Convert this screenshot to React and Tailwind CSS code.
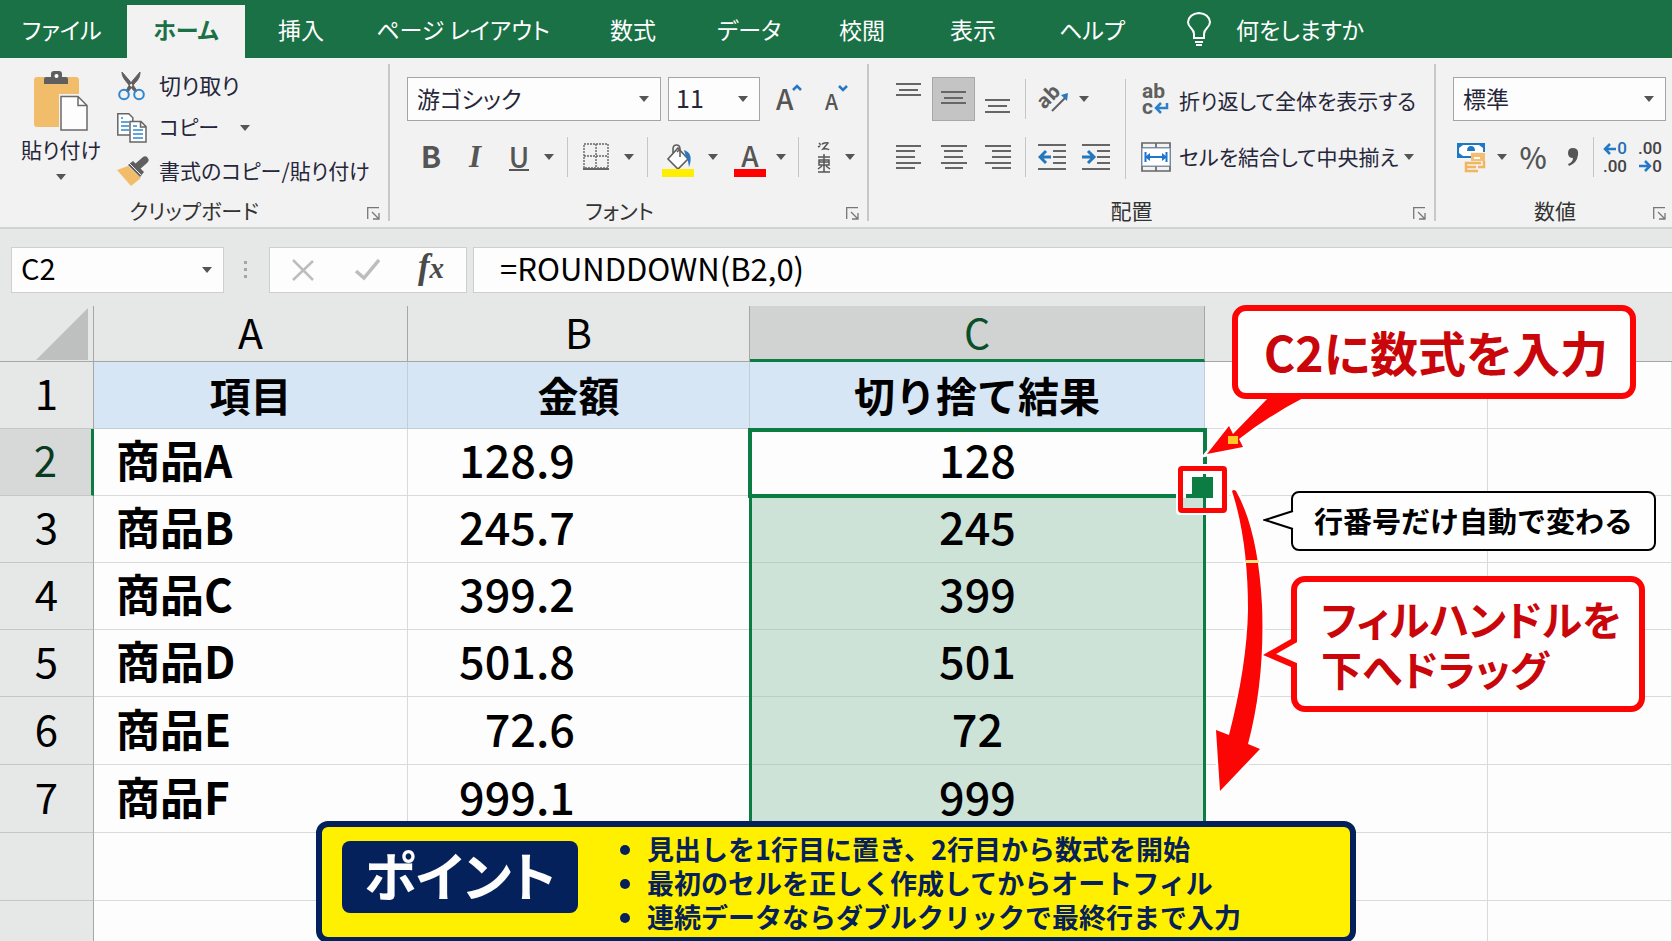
import { useState } from 'react';

const tabs = [
  { name: 'ファイル', cls: 'w-[127px] pl-[22px] text-left' },
  { name: 'ホーム', cls: 'w-[118px] text-center', active: true },
  { name: '挿入', cls: 'w-[112px] text-center' },
  { name: 'ページ レイアウト', cls: 'w-[212px] text-center' },
  { name: '数式', cls: 'w-[128px] text-center' },
  { name: 'データ', cls: 'w-[104px] text-center' },
  { name: '校閲', cls: 'w-[122px] text-center' },
  { name: '表示', cls: 'w-[100px] text-center' },
  { name: 'ヘルプ', cls: 'w-[138px] text-center' },
];

const items = [
  { name: '商品A', price: '128.9', result: '128' },
  { name: '商品B', price: '245.7', result: '245' },
  { name: '商品C', price: '399.2', result: '399' },
  { name: '商品D', price: '501.8', result: '501' },
  { name: '商品E', price: '72.6', result: '72' },
  { name: '商品F', price: '999.1', result: '999' },
];

const points = [
  '見出しを1行目に置き、2行目から数式を開始',
  '最初のセルを正しく作成してからオートフィル',
  '連続データならダブルクリックで最終行まで入力',
];

const Caret = ({ className = '' }) => (
  <svg viewBox="0 0 12 7" className={`w-[10px] h-[6px] shrink-0 ${className}`}>
    <path d="M0 0h12L6 7z" fill="#555" />
  </svg>
);

const CaretButton = ({ label, className = '' }) => (
  <button aria-label={label} className={`w-4 h-11 flex items-center justify-center ${className}`}>
    <Caret />
  </button>
);

const Sep = ({ className = '' }) => <span className={`w-px h-10 bg-[#c6c6c6] shrink-0 ${className}`} />;

const IconButton = ({ label, className = 'w-8', children }) => (
  <button aria-label={label} className={`h-11 flex items-center justify-center shrink-0 ${className}`}>
    {children}
  </button>
);

const SelectBox = ({ label, options, className, textClass = 'pl-[9px] pb-[2px] text-[23px]' }) => (
  <div className={`relative bg-[#fdfdfd] border shrink-0 ${className}`}>
    <select aria-label={label} className={`appearance-none w-full h-full bg-transparent outline-none ${textClass}`}>
      {options.map((o) => <option key={o}>{o}</option>)}
    </select>
    <Caret className="absolute right-[11px] top-1/2 -translate-y-1/2 pointer-events-none" />
  </div>
);

const Group = ({ name, className, labelClass = '', children }) => (
  <section className={`relative h-[157px] border-r-2 border-[#c8c8c8] shrink-0 ${className}`}>
    {children}
    <h2 className={`absolute inset-x-0 bottom-0 h-[21px] leading-[21px] text-[21px] text-center text-[#333] ${labelClass}`}>{name}</h2>
    <button aria-label={`${name}の詳細`} className="absolute right-2 bottom-px">
      <svg viewBox="0 0 13 13" className="w-[13px] h-[13px]" fill="none" stroke="#777" strokeWidth="1.3">
        <path d="M.7 12V.7H12M5 5l6.5 6.5M12 6v6H6" />
      </svg>
    </button>
  </section>
);

// Text lines of the alignment icons, each as [x1, x2, y]
const Lines = ({ rows }) => (
  <svg viewBox="0 0 26 44" className="w-[26px] h-11" stroke="#666" strokeWidth="2">
    {rows.map(([a, b, y]) => <path key={y} d={`M${a} ${y}H${b}`} />)}
  </svg>
);

const PasteIcon = () => (
  <svg viewBox="0 0 56 62" className="w-14 h-[62px]">
    <rect x="1" y="6" width="45" height="50" rx="3" fill="#f2bd6b" />
    <path d="M11 13V8q0-2 2-2h5V3q0-3 3-3h5q3 0 3 3v3h4q2 0 2 2v5z" fill="#5f5f5f" />
    <circle cx="23.500" cy="5" r="2" fill="#fff" />
    <path d="M28 25h18l9 9v26H28z" fill="#fdfdfd" stroke="#f2f2f2" strokeWidth="4" />
    <path d="M28 25.500h17l9 9V59H28zM45 25.500v9h9" fill="#fdfdfd" stroke="#6a6a6a" strokeWidth="1.500" />
  </svg>
);

const CutIcon = () => (
  <svg viewBox="0 0 30 30" className="w-[30px] h-[30px]">
    <path d="M5 1c0 5 3 8 7 13l6 7 2-1C16 13 10 7 5 1zM23 1c0 5-2 8-6 12l-6 8-2-1C12 13 18 7 23 1z" fill="#5f5f5f" stroke="#5f5f5f" />
    <circle cx="7" cy="23.500" r="4.800" fill="none" stroke="#2f86d1" strokeWidth="2" />
    <circle cx="22" cy="23.500" r="4.800" fill="none" stroke="#2f86d1" strokeWidth="2" />
  </svg>
);

const CopyIcon = () => (
  <svg viewBox="0 0 30 30" className="w-[30px] h-[30px]" strokeWidth="1.500">
    <path d="M.8.800h11l4 4V22H.800z" fill="#fff" stroke="#666" />
    <path d="M4 5h2M4 9h8M4 13h8M4 17h8" stroke="#2f86d1" />
    <path d="M13 8.500h11l5 5V29H13zM23.500 8.500V14H29" fill="#fff" stroke="#666" />
    <path d="M16 13h4M16 17h10M16 21h10M16 25h10" stroke="#2f86d1" />
  </svg>
);

const BrushIcon = () => (
  <svg viewBox="0 0 32 30" className="w-8 h-[30px]">
    <path d="M0 14l11-4 13 12-10 8z" fill="#f2bd6b" />
    <path d="M11 9l5-4 11 11-4 5z" fill="#5f5f5f" />
    <path d="M20 11l8-7" stroke="#5f5f5f" strokeWidth="7" strokeLinecap="round" />
    <path d="M12 7l12 12" stroke="#f2f2f2" strokeWidth="1" />
  </svg>
);

const BorderIcon = () => (
  <svg viewBox="0 0 26 28" className="w-[26px] h-7" fill="none" stroke="#666">
    <path d="M1 1h24v24H1zM13 1v24M1 13h24" strokeWidth="1.400" strokeDasharray="2 1" />
    <path d="M0 26h26" strokeWidth="2" />
  </svg>
);

const FillIcon = () => (
  <svg viewBox="0 0 32 34" className="w-8 h-[34px]">
    <path d="M16 4l10 11-10 10L6 15z" fill="#fff" stroke="#5f5f5f" strokeWidth="1.600" />
    <path d="M11 9V5q0-4 3.500-4T18 5v8M15 8l3-3" fill="none" stroke="#5f5f5f" strokeWidth="1.600" />
    <path d="M22 6q10 3 5 17-1-8-3-10z" fill="#2b77bd" />
    <path d="M0 25h32v8H0z" fill="#ffee00" />
  </svg>
);

const OrientationIcon = () => (
  <svg viewBox="0 0 30 30" className="w-[30px] h-[30px] overflow-visible">
    <text x="1" y="22" transform="rotate(-45 8 19)" fontSize="20" fontWeight="700" fill="#5f5f5f" className="font-['Noto_Sans']">ab</text>
    <path d="M13 27l14-14" stroke="#5f5f5f" strokeWidth="2" />
    <path d="M22 11l7-2-1 8z" fill="#2b77bd" />
  </svg>
);

const WrapIcon = () => (
  <svg viewBox="0 0 28 32" className="w-7 h-8 overflow-visible" fontSize="21" fontWeight="700" fill="#5f5f5f">
    <text x="1" y="15" className="font-['Roboto']">ab</text>
    <text x="1" y="31" className="font-['Roboto']">c</text>
    <path d="M26 20v5H16M20 20l-5 5 5 5" fill="none" stroke="#2b7fcb" strokeWidth="2.500" />
  </svg>
);

const MergeIcon = () => (
  <svg viewBox="0 0 30 30" className="w-[30px] h-[30px]" fill="none">
    <path d="M1 1h28v28H1zM15 1v5M15 24v5M1 6h28M1 24h28" stroke="#666" strokeWidth="1.700" />
    <path d="M1 6h28v18H1z" fill="#fff" stroke="#7d99b5" />
    <path d="M4 15h22M4.500 10v10M25.500 10v10" stroke="#1c75cf" strokeWidth="2" />
    <path d="M4 15l5-4v8zM26 15l-5-4v8z" fill="#1c75cf" />
  </svg>
);

const IndentIcon = ({ right }) => (
  <svg viewBox="0 0 28 28" className="w-7 h-7" fill="none">
    <path d="M0 2h28M15 8h13M15 14h13M15 20h13M0 26h28" stroke="#666" strokeWidth="2" />
    <path d={right ? 'M0 14h11M6 8l6 6-6 6' : 'M13 14H2M8 8l-6 6 6 6'} stroke="#2476bd" strokeWidth="3" />
  </svg>
);

const CurrencyIcon = () => (
  <svg viewBox="0 0 30 32" className="w-[30px] h-8" fill="none">
    <path d="M1 2h28v15H1z" fill="#1f78c4" />
    <path d="M7 4h16l4 3v5l-4 3H7l-4-3V7z" fill="#fff" />
    <path d="M15 5q4 0 4 5h-8q0-5 4-5z" fill="#1f78c4" />
    <path d="M15 11h14v12H15z" fill="#f2f2f2" />
    <path d="M15 12h14v8H15z" fill="#f4bd70" />
    <path d="M18 17h6" stroke="#fff" strokeWidth="2" />
    <path d="M28 20v6h-6M25 22H10v4h10M10 26v4h12" stroke="#f1b560" strokeWidth="2.500" />
  </svg>
);

const DecimalIcon = ({ more }) => (
  <svg viewBox="0 0 26 32" className="w-[26px] h-8 overflow-visible" fontSize="17" fontWeight="500">
    <text x="25" y="13" textAnchor="end" fill={more ? '#1f6fb8' : '#444'} className="font-['Roboto']">{more ? '0' : '.00'}</text>
    <text x="25" y="31" textAnchor="end" fill="#444" className="font-['Roboto']">{more ? '.00' : '0'}</text>
    <path d={more ? 'M14 8H4M8 3L3 8l5 5' : 'M2 25h10M8 20l5 5-5 5'} fill="none" stroke="#2379c6" strokeWidth="2.500" />
  </svg>
);

const Ribbon = () => (
  <div className="flex pt-[6px] h-[171px] bg-[#f2f2f2] border-b-2 border-[#d2d3d3] text-[#26263a] overflow-hidden">
    <Group name="クリップボード" className="w-[390px]">
      <div className="flex">
        <button className="w-[114px] h-[122px] pt-[7px] pl-2 flex flex-col items-center text-[21px] leading-[26px]">
          <PasteIcon />
          <span className="pt-[3px]">貼り付け</span>
          <Caret className="mt-3" />
        </button>
        <div className="flex flex-col text-[21px]">
          <button className="h-[43px] flex items-center gap-[12px] pl-[3px]"><CutIcon /><span className="pb-[2px] text-[22px]">切り取り</span></button>
          <div className="h-[41px] flex items-center">
            <button className="flex items-center gap-[12px] pl-[3px]"><CopyIcon /><span className="pb-[2px]">コピー</span></button>
            <CaretButton label="コピーのオプション" className="ml-[18px]" />
          </div>
          <button className="h-[46px] flex items-center gap-[10px] pl-[3px]"><BrushIcon /><span>書式のコピー/貼り付け</span></button>
        </div>
      </div>
    </Group>

    <Group name="フォント" className="w-[479px]" labelClass="pr-[18px]">
      <div className="flex pt-[13px] pl-[17px]">
        <SelectBox label="フォント名" options={['游ゴシック']} className="w-[254px] h-11 border-[#a5a5a5]" />
        <SelectBox label="フォント サイズ" options={['11']} className="w-[92px] h-11 ml-[7px] border-[#a5a5a5]" textClass="pl-[7px] pb-[2px] text-[25px]" />
        <IconButton label="フォント サイズの拡大" className="w-12 ml-[5px]">
          <svg viewBox="0 0 26 30" className="w-[26px] h-[30px] overflow-visible">
            <text x="0" y="26" fontSize="28" fontWeight="500" fill="#555">A</text>
            <path d="M17 6l4-4 4 4" fill="none" stroke="#2379c6" strokeWidth="2.500" />
          </svg>
        </IconButton>
        <IconButton label="フォント サイズの縮小" className="w-12">
          <svg viewBox="0 0 26 30" className="w-[26px] h-[30px] overflow-visible">
            <text x="1" y="26" fontSize="21" fontWeight="500" fill="#555">A</text>
            <path d="M15 2l4 4 4-4" fill="none" stroke="#2379c6" strokeWidth="2.500" />
          </svg>
        </IconButton>
      </div>
      <div className="flex items-center pt-[14px] pl-[19px] text-[#555]">
        <IconButton label="太字" className="w-11 pb-[3px] text-[30px] font-bold">B</IconButton>
        <IconButton label="斜体" className="w-11 text-[31px] font-bold italic font-['Liberation_Serif']">I</IconButton>
        <IconButton label="下線" className="w-11"><span className="text-[28px] leading-[26px] font-medium border-b-2 border-[#555]">U</span></IconButton>
        <CaretButton label="下線のオプション" />
        <Sep className="ml-[10px]" />
        <IconButton label="罫線" className="w-8 ml-3"><BorderIcon /></IconButton>
        <CaretButton label="罫線のオプション" className="ml-[9px]" />
        <Sep className="ml-[10px]" />
        <IconButton label="塗りつぶしの色" className="w-8 ml-[14px] pt-[8px]"><FillIcon /></IconButton>
        <CaretButton label="塗りつぶしのオプション" className="ml-[11px]" />
        <IconButton label="フォントの色" className="w-8 ml-[13px] pt-[8px]">
          <svg viewBox="0 0 32 34" className="w-8 h-[34px] overflow-visible">
            <text x="16" y="23" textAnchor="middle" fontSize="28" fontWeight="500" fill="#555">A</text>
            <path d="M0 25h32v8H0z" fill="#f00" />
          </svg>
        </IconButton>
        <CaretButton label="フォントの色のオプション" className="ml-[7px]" />
        <Sep className="ml-[9px]" />
        <IconButton label="ふりがな" className="w-7 ml-[11px]">
          <svg viewBox="0 0 16 32" className="w-4 h-8" fill="none" stroke="#555" strokeWidth="1.500">
            <path d="M3 2l2 2M2 6l2-1M6 3q4-2 6-1L7 8q5-1 6 1M2 16h12M8 13v18M3 19h10v5H3zM3 21h10M2 28l4-3M14 28l-4-3M2 31h12" />
          </svg>
        </IconButton>
        <CaretButton label="ふりがなのオプション" className="ml-1" />
      </div>
    </Group>

    <Group name="配置" className="w-[567px]" labelClass="pr-[40px]">
      <div className="flex pt-[13px]">
        <div>
          <div className="flex items-center h-11 pl-[17px]">
            <IconButton label="上揃え" className="w-[46px]"><Lines rows={[[0, 25, 7], [3, 22, 13], [0, 25, 18]]} /></IconButton>
            <IconButton label="上下中央揃え" className="w-[43px] bg-[#c4c4c4] border border-[#a8a8a8]"><Lines rows={[[0, 25, 15], [3, 22, 21], [0, 25, 26]]} /></IconButton>
            <IconButton label="下揃え" className="w-[46px]"><Lines rows={[[0, 25, 23], [3, 22, 29], [0, 25, 35]]} /></IconButton>
            <Sep className="ml-1" />
            <IconButton label="方向" className="w-8 ml-3"><OrientationIcon /></IconButton>
            <CaretButton label="方向のオプション" className="ml-[6px]" />
          </div>
          <div className="flex items-center h-11 mt-[14px] pl-[17px]">
            <IconButton label="左揃え" className="w-[46px]"><Lines rows={[[0, 25, 11], [0, 19, 16], [0, 19, 22], [0, 25, 28], [0, 19, 33]]} /></IconButton>
            <IconButton label="中央揃え" className="w-[43px]"><Lines rows={[[0, 26, 11], [3, 22, 16], [3, 22, 22], [0, 26, 28], [4, 22, 33]]} /></IconButton>
            <IconButton label="右揃え" className="w-[46px]"><Lines rows={[[0, 26, 11], [7, 26, 16], [7, 26, 22], [0, 26, 28], [7, 26, 33]]} /></IconButton>
            <Sep className="ml-1" />
            <IconButton label="インデントを減らす" className="w-8 ml-[10px]"><IndentIcon /></IconButton>
            <IconButton label="インデントを増やす" className="w-8 ml-3"><IndentIcon right /></IconButton>
          </div>
        </div>
        <span className="w-px h-[100px] mt-[2px] ml-[13px] bg-[#c6c6c6]" />
        <div className="pl-[15px] text-[21px]">
          <button className="flex items-center h-11 gap-[10px]"><WrapIcon /><span className="pt-1">折り返して全体を表示する</span></button>
          <div className="flex items-center mt-[14px]">
            <button className="flex items-center h-11 gap-[8px]"><MergeIcon /><span>セルを結合して中央揃え</span></button>
            <CaretButton label="結合のオプション" className="ml-[3px]" />
          </div>
        </div>
      </div>
    </Group>

    <Group name="数値" className="w-[240px] border-r-0">
      <div className="pt-[13px] pl-[17px]">
        <SelectBox label="表示形式" options={['標準']} className="w-[213px] h-11 border-[#a5a5a5]" />
        <div className="flex items-center mt-[14px] text-[#555]">
          <IconButton label="通貨表示形式" className="w-9"><CurrencyIcon /></IconButton>
          <CaretButton label="通貨のオプション" className="ml-[5px]" />
          <IconButton label="パーセント スタイル" className="w-8 ml-[7px] text-[29px] font-medium">%</IconButton>
          <IconButton label="桁区切りスタイル" className="w-8 ml-2">
            <svg viewBox="0 0 12 20" className="w-3 h-5"><path d="M6 1q6 0 5 7-1 8-9 11l-1-2q5-2 5-6-5 0-5-5t5-5z" fill="#555" /></svg>
          </IconButton>
          <Sep className="ml-1" />
          <IconButton label="小数点以下の表示桁数を増やす" className="w-8 ml-[5px]"><DecimalIcon more /></IconButton>
          <IconButton label="小数点以下の表示桁数を減らす" className="w-8 ml-[3px]"><DecimalIcon /></IconButton>
        </div>
      </div>
    </Group>
  </div>
);

const FormulaBar = () => {
  const [formula, setFormula] = useState('=ROUNDDOWN(B2,0)');

  return (
    <div className="flex h-[77px] pt-[18px] pl-[11px] text-black">
      <SelectBox label="名前ボックス" options={['C2']} className="w-[213px] h-[46px] border-[#cfcfcf]" textClass="pl-[9px] pb-[6px] text-[29px] leading-[36px]" />
      <svg viewBox="0 0 4 20" className="w-1 h-5 mt-[13px] ml-5" fill="#a5a5a5">
        <path d="M0 1h3v3H0zM0 8h3v3H0zM0 15h3v3H0z" />
      </svg>
      <div className="flex w-[198px] h-[46px] ml-[21px] bg-[#fdfdfd] border border-[#cfcfcf]">
        <IconButton label="キャンセル" className="w-[66px]">
          <svg viewBox="0 0 22 22" className="w-[22px] h-[22px]" stroke="#bdbdbd" strokeWidth="2.500"><path d="M1 1l20 20M21 2L1 21" /></svg>
        </IconButton>
        <IconButton label="入力" className="w-[62px]">
          <svg viewBox="0 0 25 22" className="w-[25px] h-[22px]" fill="none" stroke="#bdbdbd" strokeWidth="3.500"><path d="M1 12l8 7L24 1" /></svg>
        </IconButton>
        <IconButton label="関数の挿入" className="w-[66px] pb-[6px] text-[35px] font-bold italic text-[#4a4a4a] font-['Liberation_Serif']">
          <span>f<span className="text-[29px]">x</span></span>
        </IconButton>
      </div>
      <input
        aria-label="数式バー"
        value={formula}
        onChange={(e) => setFormula(e.target.value)}
        className="flex-1 min-w-0 h-[46px] ml-[6px] pl-[26px] pb-1 bg-[#fdfdfd] border border-r-0 border-[#cfcfcf] text-[31px] outline-none [font-feature-settings:normal]"
      />
    </div>
  );
};

const line = 'border-r border-b border-[#d9dadb]';

const SheetTable = () => (
  <table className="w-full table-fixed border-separate border-spacing-0 text-black [font-feature-settings:normal]">
    <colgroup>
      <col className="w-[94px]" />
      <col className="w-[314px]" />
      <col className="w-[342px]" />
      <col className="w-[455px]" />
      <col className="w-[283px]" />
      <col />
    </colgroup>
    <thead>
      <tr className="h-[56px] bg-[#e6e7e7] text-[41px] leading-[48px]">
        <td className="p-0 border-r border-b border-[#a6a6a6]">
          <svg viewBox="0 0 52 52" className="w-[52px] h-[52px] ml-9"><path d="M52 0v52H0z" fill="#bebfbf" /></svg>
        </td>
        <th className="p-0 pb-[6px] font-normal border-r border-b border-[#a6a6a6]">A</th>
        <th className="p-0 pb-[6px] font-normal border-r border-b border-[#a6a6a6]">B</th>
        <th className="p-0 pb-[4px] font-normal border-r border-b-3 border-r-[#a6a6a6] border-b-[#0b7d43] bg-[#d1d2d2] text-[#0a4f2a]">C</th>
        <td className="border-b border-[#a6a6a6]" />
        <td className="border-b border-[#a6a6a6]" />
      </tr>
    </thead>
    <tbody>
      <tr className="h-[67px] text-[41px] leading-[58px]">
        <th className="p-0 pb-[6px] font-normal bg-[#e6e7e7] border-r border-b border-r-[#a6a6a6] border-b-[#c6c6c6] text-[42px]">1</th>
        <th className="p-0 pb-[3px] bg-[#d6e6f4] border-r border-b border-[#c3cdd6]">項目</th>
        <th className="p-0 pb-[3px] bg-[#d6e6f4] border-r border-b border-[#c3cdd6]">金額</th>
        <th className="p-0 pb-[3px] bg-[#d6e6f4] border-r border-b border-[#c3cdd6]">切り捨て結果</th>
        <td className={line} />
        <td className={line} />
      </tr>
      {items.map((item, i) => (
        <tr key={item.name} className={`text-[45px] leading-[58px] ${i < 4 ? 'h-[67px]' : 'h-[68px]'}`}>
          <th className={`p-0 pb-[6px] font-normal text-[42px] border-b border-b-[#c6c6c6] ${i === 0 ? 'bg-[#d7d8d8] text-[#0a3a22] border-r-3 border-r-[#0b7d43]' : 'bg-[#e6e7e7] border-r border-r-[#a6a6a6]'}`}>{i + 2}</th>
          <td className={`p-0 pl-[22px] pb-[6px] text-[44px] font-bold ${line}`}>{item.name}</td>
          <td className={`p-0 pr-[174px] pb-[6px] text-right font-medium ${line}`}>{item.price}</td>
          <td className={`p-0 pb-[6px] text-center font-medium border-b ${i === 0 ? 'border-[#d9dadb]' : 'bg-[#cee3d8] border-[#b9cfc4]'}`}>{item.result}</td>
          <td className={line} />
          <td className={line} />
        </tr>
      ))}
      {[8, 9].map((n) => (
        <tr key={n} className="h-[68px]">
          <th className="p-0 bg-[#e6e7e7] border-r border-b border-r-[#a6a6a6] border-b-[#c6c6c6]" />
          <td className={line} />
          <td className={line} />
          <td className={line} />
          <td className={line} />
          <td className={line} />
        </tr>
      ))}
    </tbody>
  </table>
);

const Selection = () => (
  <>
    <div className="absolute left-[749px] top-[122px] w-[457px] h-[406px] border-3 border-[#0b7d43]" />
    <div className="absolute left-[748px] top-[122px] w-[459px] h-[70px] border-4 border-[#0b7d43]" />
    <div className="absolute left-[1176px] top-[158px] w-[53px] h-[51px] rounded-sm bg-white" />
    <div className="absolute left-[1178px] top-[160px] w-[49px] h-[47px] border-[5px] border-[#fb0505] rounded-sm bg-[#fdfdfd]">
      <span className="absolute left-0 bottom-0 w-5 h-[10px] bg-[#cee3d8]" />
      <span className="absolute left-5 top-[3px] bottom-0 w-[3px] bg-[#0b7d43]" />
      <span className="absolute left-[3px] top-[23px] w-[6px] h-1 bg-[#0b7d43]" />
      <span className="absolute left-[9px] top-[6px] w-[21px] h-[21px] bg-[#0b7d43]" />
    </div>
  </>
);

const Callouts = () => (
  <>
    <svg viewBox="1200 390 70 410" className="absolute left-[1200px] top-[84px] w-[70px] h-[410px] overflow-visible" fill="#fb0505" stroke="#fff" strokeWidth="5" paintOrder="stroke">
      <path d="M1270 396L1233 434 1229 426 1207 454 1243 447 1239 439Q1270 415 1305 397z" />
      <path d="M1232 491q2-2 4 0Q1258 530 1262 605 1265 680 1248 744l12 5-40 42-4-61 13 5Q1247 665 1248 610 1248 540 1232 491z" />
      <path d="M1228 436h10v8h-10z" fill="#ffc928" stroke="none" />
      <path d="M1246 560h13v3h-13z" fill="#ffe680" stroke="none" />
    </svg>

    <p className="absolute left-[1232px] -top-px w-[404px] h-[94px] flex items-center justify-center pb-[2px] pl-1 border-6 border-[#fb0505] rounded-[14px] bg-[#fefefe] text-[#c9060a] text-[48px] font-bold whitespace-nowrap">
      C2に数式を入力
    </p>

    <p className="absolute left-[1291px] top-[185px] w-[365px] h-[60px] flex items-center justify-center border-2 border-black rounded-lg bg-[#fefefe] text-black text-[29px] font-bold whitespace-nowrap [font-feature-settings:normal]">
      行番号だけ自動で変わる
      <svg viewBox="0 0 32 22" className="absolute -left-[30px] top-[16px] w-8 h-[22px]">
        <path d="M30 2L2 11l28 9" fill="#fefefe" stroke="#000" strokeWidth="2" />
        <path d="M30 3h2v16h-2z" fill="#fefefe" />
      </svg>
    </p>

    <p className="absolute left-[1291px] top-[270px] w-[354px] h-[136px] flex flex-col justify-center pl-[24px] pb-[2px] border-6 border-[#fb0505] rounded-[14px] bg-[#fefefe] text-[#c9060a] text-[41px] leading-[50px] font-bold whitespace-nowrap">
      <span>フィルハンドルを</span>
      <span>下へドラッグ</span>
      <svg viewBox="0 0 36 36" className="absolute -left-[34px] top-[52px] w-9 h-9">
        <path d="M28 5L0 21l28 12z" fill="#fb0505" />
        <path d="M36 7L13 20l23 10z" fill="#fefefe" />
      </svg>
    </p>
  </>
);

const PointBox = () => (
  <aside className="absolute inset-x-0 -bottom-[2px] mx-auto w-[1040px] h-[122px] flex items-start pl-[20px] border-6 border-[#04215c] rounded-[12px] bg-[#fff000] text-[#06205a]">
    <h3 className="w-[236px] h-[72px] mt-[14px] flex items-center justify-center pb-[6px] rounded-lg bg-[#04215c] text-[#fdfdfd] text-[53px] leading-[60px] font-bold">ポイント</h3>
    <ul className="mt-[5px] pl-[69px] text-[27px] leading-[34px] font-bold list-disc marker:text-[#06205a] [font-feature-settings:normal]">
      {points.map((p) => <li key={p}>{p}</li>)}
    </ul>
  </aside>
);

const App = () => (
  <div className="h-screen flex flex-col overflow-hidden bg-[#e6e7e7] font-['Noto_Sans_CJK_JP','Noto_Sans',sans-serif] [font-feature-settings:'palt']">
    <nav className="flex items-end h-[58px] shrink-0 bg-[#1a7145] text-white text-[23px] overflow-hidden">
      {tabs.map((tab) => (
        <button
          key={tab.name}
          className={`h-[53px] shrink-0 pb-[5px] whitespace-nowrap ${tab.cls} ${tab.active ? 'bg-[#f2f2f2] text-[#1a7145] font-bold' : ''}`}
        >
          {tab.name}
        </button>
      ))}
      <button className="flex items-center gap-[24px] h-[53px] pl-[25px] pb-[5px] shrink-0">
        <svg viewBox="0 0 26 34" className="w-[26px] h-[34px]" fill="none" stroke="#fff" strokeWidth="2">
          <path d="M8 26v-4q0-3-3-6-3-3-3-6Q3 2 13 1q10 1 11 9 0 3-3 6-3 3-3 6v4zM9 30h8M10 33h6" />
        </svg>
        何をしますか
      </button>
    </nav>
    <div className="shrink-0">
      <Ribbon />
      <FormulaBar />
    </div>
    <main className="relative flex-1 min-h-0 bg-[#fdfdfd]">
      <SheetTable />
      <Selection />
      <Callouts />
      <PointBox />
    </main>
  </div>
);

export default App;
